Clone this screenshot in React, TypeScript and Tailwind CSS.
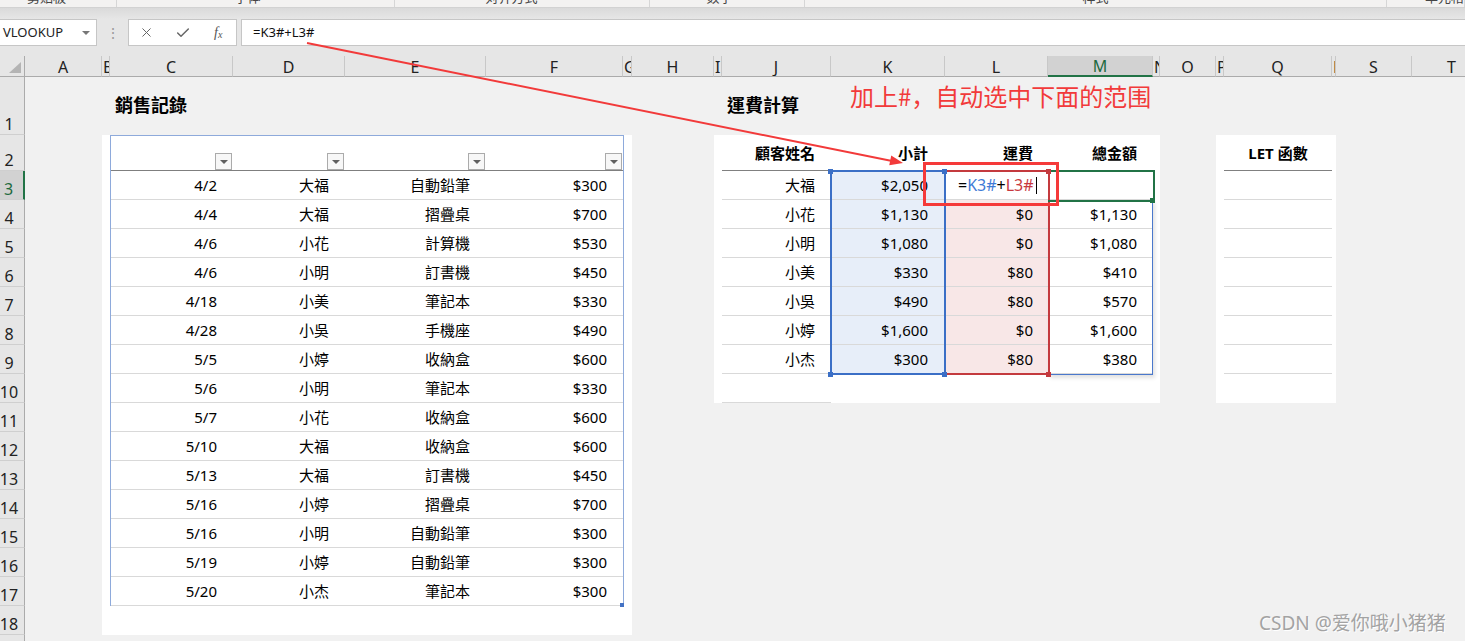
import React from 'react';
import { X, Check } from 'lucide-react';

const colHeads = [
  { l: 'A', w: 'w-[77px]', narrow: false },
  { l: 'B', w: 'w-[8px]', narrow: true },
  { l: 'C', w: 'w-[123px]', narrow: false },
  { l: 'D', w: 'w-[112px]', narrow: false },
  { l: 'E', w: 'w-[141px]', narrow: false },
  { l: 'F', w: 'w-[137px]', narrow: false },
  { l: 'G', w: 'w-[9px]', narrow: true },
  { l: 'H', w: 'w-[82px]', narrow: false },
  { l: 'I', w: 'w-[8px]', narrow: true },
  { l: 'J', w: 'w-[109px]', narrow: false },
  { l: 'K', w: 'w-[114px]', narrow: false },
  { l: 'L', w: 'w-[103px]', narrow: false },
  { l: 'M', w: 'w-[105px]', narrow: false },
  { l: 'N', w: 'w-[7px]', narrow: true },
  { l: 'O', w: 'w-[56px]', narrow: false },
  { l: 'P', w: 'w-[8px]', narrow: true },
  { l: 'Q', w: 'w-[108px]', narrow: false },
  { l: 'R', w: 'w-[4px]', narrow: true },
  { l: 'S', w: 'w-[76px]', narrow: false },
  { l: 'T', w: 'w-[80px]', narrow: false },
];

const rowHeads = Array.from({ length: 19 }, (_, i) => ({
  n: i + 1,
  h: i === 0 ? 'h-[58px]' : i === 1 ? 'h-[36px]' : 'h-[29px]',
}));

const sales = [
  ['4/2', '大福', '自動鉛筆', '$300'],
  ['4/4', '大福', '摺疊桌', '$700'],
  ['4/6', '小花', '計算機', '$530'],
  ['4/6', '小明', '訂書機', '$450'],
  ['4/18', '小美', '筆記本', '$330'],
  ['4/28', '小吳', '手機座', '$490'],
  ['5/5', '小婷', '收納盒', '$600'],
  ['5/6', '小明', '筆記本', '$330'],
  ['5/7', '小花', '收納盒', '$600'],
  ['5/10', '大福', '收納盒', '$600'],
  ['5/13', '大福', '訂書機', '$450'],
  ['5/16', '小婷', '摺疊桌', '$700'],
  ['5/16', '小明', '自動鉛筆', '$300'],
  ['5/19', '小婷', '自動鉛筆', '$300'],
  ['5/20', '小杰', '筆記本', '$300'],
];

const shipping = [
  ['大福', '$2,050', '', ''],
  ['小花', '$1,130', '$0', '$1,130'],
  ['小明', '$1,080', '$0', '$1,080'],
  ['小美', '$330', '$80', '$410'],
  ['小吳', '$490', '$80', '$570'],
  ['小婷', '$1,600', '$0', '$1,600'],
  ['小杰', '$300', '$80', '$380'],
];

const ribbonGroups = [
  { label: '剪贴板', cls: 'w-[117px] justify-center pr-[23px]' },
  { label: '字体', cls: 'w-[278px] justify-center pr-[16px]' },
  { label: '对齐方式', cls: 'w-[255px] justify-center pr-[21px]' },
  { label: '数字', cls: 'w-[155px] justify-center pr-[15px]' },
  { label: '样式', cls: 'w-[582px] justify-center' },
  { label: '单元格', cls: 'flex-1 justify-start pl-[38px]' },
];

const FilterButton = () => (
  <div className="flex h-[17px] w-[17px] items-center justify-center border border-[#ababab] bg-[#f7f7f7]">
    <div className="h-0 w-0 border-l-[4px] border-r-[4px] border-t-[4px] border-l-transparent border-r-transparent border-t-[#5f5f5f]" />
  </div>
);

const Handle = ({ cls }: { cls: string }) => (
  <div className={`absolute h-[5px] w-[5px] ${cls}`} />
);

const App = () => {
  return (
    <div className="relative h-[641px] w-[1465px] overflow-hidden bg-[#e6e6e6] font-['Noto_Sans','Noto_Sans_CJK_TC',sans-serif] text-[#000]">
      {/* ribbon leftovers */}
      <div className="flex h-[8px] overflow-hidden border-b border-[#d2d2d2] bg-[#f3f2f1]">
        {ribbonGroups.map((g) => (
          <div key={g.label} className={`flex h-full shrink-0 items-start border-r border-[#d6d6d6] ${g.cls}`}>
            <span className="-mt-[11px] text-[13px] leading-[16px] text-[#444]">{g.label}</span>
          </div>
        ))}
      </div>
      <div className="h-[11px] bg-gradient-to-b from-[#dadada] to-[#e6e6e6]" />

      {/* formula bar */}
      <div className="flex h-[27px] items-stretch">
        <div className="flex w-[97px] shrink-0 items-center justify-between border border-l-0 border-[#c6c6c6] bg-white pl-[3px] pr-[6px]">
          <span className="text-[13px] leading-none text-[#222]">VLOOKUP</span>
          <div className="h-0 w-0 border-l-[4px] border-r-[4px] border-t-[4px] border-l-transparent border-r-transparent border-t-[#777]" />
        </div>
        <div className="flex w-[31px] shrink-0 items-center justify-center text-[14px] text-[#9a9a9a]">⋮</div>
        <div className="flex w-[109px] shrink-0 items-center border border-[#c6c6c6] bg-white">
          <div className="flex w-[36px] justify-center text-[#666]">
            <X size={15} strokeWidth={1.6} />
          </div>
          <div className="flex w-[36px] justify-center text-[#666]">
            <Check size={16} strokeWidth={2.2} />
          </div>
          <div className="flex w-[36px] justify-center font-['Liberation_Serif',serif] text-[14px] italic leading-none text-[#555]">
            f<span className="mt-[4px] text-[10px]">x</span>
          </div>
        </div>
        <div className="w-[4px] shrink-0" />
        <div className="flex flex-1 items-center border border-r-0 border-[#c6c6c6] bg-white pl-[11px] text-[13px] text-[#111]">
          =K3#+L3#
        </div>
      </div>
      <div className="h-[10px]" />

      {/* column headers */}
      <div className="flex h-[21px] bg-[#e6e6e6]">
        <div className="relative w-[25px] shrink-0 border-b border-r border-[#ababab]">
          <svg className="absolute left-0 top-0" width="24" height="20">
            <polygon points="21,6 21,17 9,17" fill="#b4b4b4" />
          </svg>
        </div>
        {colHeads.map((c) => (
          <div
            key={c.l}
            className={`flex h-full shrink-0 items-center overflow-hidden whitespace-nowrap border-r border-[#c8c8c8] pt-[1px] text-[16px] leading-[20px] ${c.w} ${
              c.narrow ? 'justify-start pl-[1px]' : 'justify-center'
            } ${c.l === 'M' ? 'border-b-2 border-b-[#217346] bg-[#d2d2d2] text-[#1d6a3e]' : 'border-b border-b-[#ababab] text-[#222]'}`}
          >
            {c.l}
          </div>
        ))}
      </div>

      {/* body */}
      <div className="flex">
        <div className="w-[25px] shrink-0">
          {rowHeads.map((r) => (
            <div
              key={r.n}
              className={`flex items-end justify-center border-b border-b-[#cfcfcf] pr-[6px] text-[16px] leading-[20px] ${r.h} ${
                r.n === 3 ? 'border-r-2 border-r-[#217346] bg-[#d2d2d2] text-[#1d6a3e]' : 'border-r border-r-[#ababab] bg-[#e6e6e6] text-[#222]'
              }`}
            >
              {r.n}
            </div>
          ))}
        </div>

        <div className="flex-1 bg-[#f1f1f1]">
          {/* row 1: titles */}
          <div className="flex h-[58px]">
            <div className="w-[77px] shrink-0" />
            <div className="flex w-[530px] shrink-0 items-center pb-[3px] pl-[13px] text-[18px] font-bold leading-[24px]">銷售記錄</div>
            <div className="w-[82px] shrink-0" />
            <div className="flex w-[446px] shrink-0 pl-[13px]">
              <div className="flex w-[123px] items-center pb-[3px] text-[18px] font-bold leading-[24px]">運費計算</div>
              <div className="mt-[3px] font-['Noto_Sans_CJK_SC',sans-serif] text-[24px] leading-[32px] text-[#f23a3a]">
                加上#，自动选中下面的范围
              </div>
            </div>
          </div>

          {/* panels */}
          <div className="flex items-start">
            <div className="w-[77px] shrink-0" />

            {/* left panel */}
            <div className="h-[500px] w-[530px] shrink-0 bg-white pl-[8px]">
              <div className="relative w-[514px] border-x border-t border-[#8eaadb] text-[15px] leading-[20px]">
                <div className="grid h-[35px] grid-cols-[122px_112px_141px_137px] border-b border-[#7f7f7f]">
                  {[0, 1, 2, 3].map((i) => (
                    <div key={i} className="flex items-end justify-end pr-[1px]">
                      <FilterButton />
                    </div>
                  ))}
                </div>
                {sales.map((row, ri) => (
                  <div key={ri} className="grid h-[29px] grid-cols-[122px_112px_141px_137px] border-b border-[#d9d9d9]">
                    {row.map((v, ci) => (
                      <div key={ci} className="flex items-center justify-end pr-[16px]">
                        {v}
                      </div>
                    ))}
                  </div>
                ))}
                <div className="absolute bottom-[-1px] right-[-1px] h-[4px] w-[4px] bg-[#4472c4]" />
              </div>
            </div>

            <div className="w-[82px] shrink-0" />

            {/* right panel */}
            <div className="relative h-[268px] w-[446px] shrink-0 bg-white pl-[8px]">
              <div className="w-[431px] text-[15px] leading-[20px]">
                <div className="grid h-[36px] grid-cols-[109px_114px_103px_105px] border-b border-[#808080] font-bold">
                  <div className="flex items-center justify-end pr-[16px] pt-[1px]">顧客姓名</div>
                  <div className="flex items-center justify-end pr-[17px] pt-[1px]">小計</div>
                  <div className="flex items-center justify-end pr-[15px] pt-[1px]">運費</div>
                  <div className="flex items-center justify-end pr-[16px] pt-[1px]">總金額</div>
                </div>
                {shipping.map((row, ri) => (
                  <div key={ri} className="grid h-[29px] grid-cols-[109px_114px_103px_105px] border-b border-[#d9d9d9]">
                    <div className="flex items-center justify-end pr-[16px]">{row[0]}</div>
                    <div className="flex items-center justify-end bg-[#e7eef9] pr-[17px]">{row[1]}</div>
                    {ri === 0 ? (
                      <div className="flex items-center justify-start bg-white pl-[13px] text-[16px]">
                        <span>=</span>
                        <span className="text-[#3f7bd6]">K3#</span>
                        <span>+</span>
                        <span className="text-[#c8383e]">L3#</span>
                        <span className="ml-[2px] h-[17px] w-[1px] bg-black" />
                      </div>
                    ) : (
                      <div className="flex items-center justify-end bg-[#f8e7e7] pr-[15px]">{row[2]}</div>
                    )}
                    <div className="flex items-center justify-end pr-[16px]">{row[3]}</div>
                  </div>
                ))}
                <div className="grid h-[29px] grid-cols-[109px_114px_103px_105px]">
                  <div className="border-b border-[#d9d9d9]" />
                </div>
              </div>

              {/* selection overlays */}
              <div className="pointer-events-none absolute left-[334px] top-[65px] h-[175px] w-[105px] border-b border-r border-[#4a78cc] shadow-[2px_3px_4px_rgba(0,0,0,0.12)]" />
              <div className="pointer-events-none absolute left-[230px] top-[35px] h-[205px] w-[106px] border-y-2 border-r-2 border-[#c43a3e]" />
              <div className="pointer-events-none absolute left-[116px] top-[35px] h-[205px] w-[116px] border-2 border-[#3b6fc6]" />
              <div className="pointer-events-none absolute left-[334px] top-[35px] h-[32px] w-[107px] border-y-2 border-r-2 border-[#217346]" />
              <Handle cls="left-[114px] top-[34px] bg-[#3b6fc6]" />
              <Handle cls="left-[228px] top-[34px] bg-[#3b6fc6]" />
              <Handle cls="left-[114px] top-[237px] bg-[#3b6fc6]" />
              <Handle cls="left-[228px] top-[237px] bg-[#3b6fc6]" />
              <Handle cls="left-[332px] top-[34px] bg-[#c43a3e]" />
              <Handle cls="left-[332px] top-[237px] bg-[#c43a3e]" />
              <Handle cls="left-[436px] top-[63px] bg-[#217346]" />
              <div className="pointer-events-none absolute left-[209px] top-[27px] h-[44px] w-[136px] border-[3px] border-[#f53a3a]" />
            </div>

            <div className="w-[56px] shrink-0" />

            {/* LET panel */}
            <div className="h-[268px] w-[120px] shrink-0 bg-white pl-[8px]">
              <div className="w-[108px] text-[15px] leading-[20px]">
                <div className="flex h-[36px] items-center justify-center border-b border-[#808080] pt-[1px] font-bold">LET 函數</div>
                {shipping.map((_, i) => (
                  <div key={i} className="h-[29px] border-b border-[#d9d9d9]" />
                ))}
              </div>
            </div>
          </div>
        </div>
      </div>

      {/* annotation arrow */}
      <svg className="pointer-events-none absolute left-0 top-0" width="1465" height="641">
        <line x1="307" y1="43" x2="892" y2="161" stroke="#f23a3a" strokeWidth="2" />
        <g transform="translate(903 163) rotate(11.4)">
          <polygon points="0,0 -13,-5 -13,5" fill="#f23a3a" />
        </g>
      </svg>

      {/* watermark */}
      <div className="pointer-events-none absolute left-[1259px] top-[611px] whitespace-nowrap font-['Noto_Sans','Noto_Sans_CJK_SC',sans-serif] text-[19px] leading-[24px] text-[#a3a3a3] [text-shadow:1px_1px_0_#ffffff]">
        CSDN @爱你哦小猪猪
      </div>
    </div>
  );
};

export default App;
